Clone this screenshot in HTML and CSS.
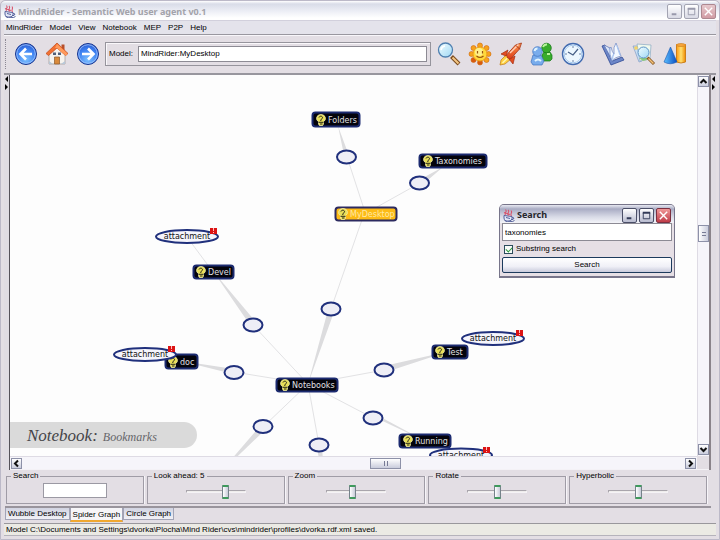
FILE: index.html
```html
<!DOCTYPE html>
<html lang="en">
<head>
<meta charset="utf-8">
<title>MindRider - Semantic Web user agent v0.1</title>
<link rel="stylesheet" href="styles.css">
</head>
<body>
<svg class="defs" aria-hidden="true">
  <defs>
    <radialGradient id="blue" cx=".5" cy=".75" r=".8"><stop offset="0" stop-color="#7cc0ff"/><stop offset=".6" stop-color="#3c7ff0"/><stop offset="1" stop-color="#2a55c8"/></radialGradient>
    <linearGradient id="glass" x2="1" y2="1"><stop offset="0" stop-color="#f2fdff"/><stop offset="1" stop-color="#9fd8f4"/></linearGradient>
    <linearGradient id="flame" x2="0" y2="1"><stop offset="0" stop-color="#ff9a50"/><stop offset="1" stop-color="#dc3a16"/></linearGradient>
    <linearGradient id="gold" x2="1"><stop offset="0" stop-color="#ff9a10"/><stop offset=".5" stop-color="#ffe070"/><stop offset="1" stop-color="#f08a00"/></linearGradient>
    <linearGradient id="cone" x2="1"><stop offset="0" stop-color="#5cc0ff"/><stop offset="1" stop-color="#0a4cc0"/></linearGradient>
    <linearGradient id="page" x2="1"><stop offset="0" stop-color="#ffffff"/><stop offset="1" stop-color="#a9c4f0"/></linearGradient>
    <symbol id="java" viewBox="0 0 12 13">
      <path d="M1 6.500L9 7.500v2a3 3 0 0 1-3 2.500H4.500A3 3 0 0 1 1 9z" fill="#e4e8f8" stroke="#55629c"/>
      <path d="M9 8.500l2 .5-1 1.500H8.500M1.500 11.500l3 1.300 5-.3 2-1M3 8.500l4 1" fill="none" stroke="#55629c"/>
      <path d="M2.500 6C.5 3.500 5 3.500 2.500 .5M5.500 6.500C3 4 7.500 3.500 5 .8M8.500 7C6.500 4.500 10 4 8 1.500M1 3.500l6 2" fill="none" stroke="#d8546c" stroke-width="1.100"/>
    </symbol>
    <symbol id="bulb" viewBox="0 0 10 12">
      <path d="M5 .4a4.500 4 0 0 1 2.500 7.300V10L6.500 11.700h-3L2.500 10V7.700A4.500 4 0 0 1 5 .4z" fill="#e9df58" stroke="#f6f3b4" stroke-width=".7"/>
      <path d="M3 3.500C3.500 1.500 7 2 6.500 4 6 5.300 4.500 5 4.800 7M2.500 8.300h5M4 10h2.500" fill="none" stroke="#26261a" stroke-width="1"/>
    </symbol>
    <symbol id="mark" viewBox="0 0 7 6"><path d="M0 0h7v6H0z" fill="#dc1414"/><path d="M3.500 0v3M3.500 4v1" stroke="#ffc0c0"/></symbol>
  </defs>
</svg>

<header class="titlebar">
  <svg class="java"><use href="#java"/></svg>
  <h1>MindRider - Semantic Web user agent v0.1</h1>
  <div class="winbtns faded">
    <button aria-label="Minimize"><svg viewBox="0 0 14 14"><path d="M4 10h5" stroke-width="2"/></svg></button>
    <button aria-label="Maximize"><svg viewBox="0 0 14 14"><path d="M3.500 4v6.500h7V4M3 4h8" stroke-width="1"/><path d="M3 4h8" stroke-width="2"/></svg></button>
    <button class="close" aria-label="Close"><svg viewBox="0 0 14 14"><path d="M3 3l8 8M11 3l-8 8" stroke-width="1.500"/></svg></button>
  </div>
</header>

<nav class="menu">
  <button>MindRider</button><button>Model</button><button>View</button><button>Notebook</button><button>MEP</button><button>P2P</button><button>Help</button>
</nav>

<div class="toolbar">
  <span class="grip"></span>
  <button class="tool" aria-label="Back"><svg viewBox="0 0 24 24"><circle cx="12" cy="12" r="10.500" fill="url(#blue)" stroke="#16338c"/><circle cx="12" cy="12" r="9.300" fill="none" stroke="#a8ccff" stroke-width=".8"/><path d="M18 12H7M12 6.500L6.500 12l5.500 5.500" fill="none" stroke="#fff" stroke-width="2.600"/></svg></button>
  <button class="tool" aria-label="Home"><svg viewBox="0 0 24 24"><path d="M4 11l8-7 8 7v11H4z" fill="#f6f3ee" stroke="#a6a09c" stroke-width=".8"/><path d="M16.500 2.500h3V8h-3z" fill="#b8502c"/><path d="M12 1L1 11.500l2.500 2L12 6l8.500 7.500 2.500-2z" fill="#f27032" stroke="#c04818" stroke-width=".7"/><path d="M12 2l-2 4 2 0 9 8 1.500-2.500z" fill="#ff9a5c"/><path d="M9.500 15h5v7h-5z" fill="#d98a3c" stroke="#8d5828" stroke-width=".7"/><path d="M8 10.500h3v2.500H8zM13 10.500h3v2.500h-3z" fill="#516078"/><path d="M4 19l4 3H4zM20 19l-4 3h4z" fill="#b8c8d8"/></svg></button>
  <button class="tool" aria-label="Forward"><svg viewBox="0 0 24 24"><circle cx="12" cy="12" r="10.500" fill="url(#blue)" stroke="#16338c"/><circle cx="12" cy="12" r="9.300" fill="none" stroke="#a8ccff" stroke-width=".8"/><path d="M6 12h11M12 6.500l5.500 5.500-5.500 5.500" fill="none" stroke="#fff" stroke-width="2.600"/></svg></button>
  <div class="model">
    <label for="model">Model:</label>
    <input id="model" type="text" value="MindRider:MyDesktop">
  </div>
  <button class="tool" aria-label="Find"><svg viewBox="0 0 24 24"><path d="M14.500 14.500l7.500 7.500" stroke="#7a4a1c" stroke-width="4"/><path d="M15.500 15.500l6 6" stroke="#f4c684" stroke-width="2"/><circle cx="8.500" cy="8" r="7" fill="url(#glass)" stroke="#5080b0" stroke-width="1.300"/><path d="M4 8a5 5 0 0 1 4-4" fill="none" stroke="#fff" stroke-width="1.500"/></svg></button>
  <button class="tool" aria-label="Sun"><svg viewBox="0 0 24 24"><g fill="#f6a21c" stroke="#d06a10" stroke-width=".6"><circle cx="12" cy="3.500" r="2.500"/><circle cx="18.500" cy="6" r="2.500"/><circle cx="20.500" cy="12" r="2.500"/><circle cx="18.500" cy="18" r="2.500"/><circle cx="12" cy="20.500" r="2.500" fill="#d85a10"/><circle cx="5.500" cy="18" r="2.500" fill="#d85a10"/><circle cx="3.500" cy="12" r="2.500"/><circle cx="5.500" cy="6" r="2.500"/></g><circle cx="12" cy="12" r="7" fill="#ffd83c" stroke="#ee9c18"/><circle cx="11" cy="10" r="4" fill="#fff08c"/><path d="M9.500 9v2.500M14.500 9v2.500M8.500 14q3.500 3 7 0" fill="none" stroke="#9a5410" stroke-width="1.200"/></svg></button>
  <button class="tool" aria-label="Launch"><svg viewBox="0 0 24 24"><path d="M7 13l-5 5-1 5 5-1 6-5z" fill="#ffcf40" stroke="#bd7818" stroke-width=".7"/><path d="M3.500 21l5-5" stroke="#fff8b0" stroke-width="1.500"/><path d="M9 8l-7 4 5 2zM16 14l-2 8-4-5z" fill="#e24c20" stroke="#a52c10" stroke-width=".7"/><path d="M22.500 1l-6 2-9 10 1 3 3 1 9-10z" fill="url(#flame)" stroke="#a53414" stroke-width=".8"/><path d="M19.500 2.500L11 11" stroke="#ffd0b8" stroke-width="1.500"/><path d="M17 3.500l4 4" stroke="#a53414"/></svg></button>
  <button class="tool" aria-label="People"><svg viewBox="0 0 24 24"><g fill="#39ac2c" stroke="#16761a" stroke-width=".7"><path d="M12 18v-5l2-3h6l2 3v4l-2 2h-7z"/><circle cx="16.500" cy="6" r="4.800"/></g><path d="M13 5a4 4 0 0 1 4-2.500M17 12h3" stroke="#b8f59c" stroke-width="1.800" fill="none"/><g fill="#79acec" stroke="#3f73bf" stroke-width=".7"><path d="M1 20l2-7h8l3 6-2 4H3z"/><circle cx="7.500" cy="9.500" r="4.800"/></g><path d="M4.500 9a3 3 0 0 1 3-2.500M5 19q3-3 6 0" stroke="#e0f4ff" stroke-width="2" fill="none"/></svg></button>
  <button class="tool" aria-label="History"><svg viewBox="0 0 24 24"><circle cx="12" cy="12" r="10.500" fill="#edf7ff" stroke="#426bb0" stroke-width="1.400"/><circle cx="12" cy="12" r="8.800" fill="none" stroke="#a9cbee"/><path d="M12 4v2M12 18v2M4 12h2M18 12h2" stroke="#6c84a8"/><path d="M7 10l5 3 5-6" fill="none" stroke="#465e86" stroke-width="1.200"/></svg></button>
  <button class="tool apart" aria-label="Book"><svg viewBox="0 0 24 24"><path d="M1 4l3-1 7 16 10-4 2 3-13 5z" fill="#6c86c8" stroke="#304a94" stroke-width=".8"/><path d="M3 3l6 3 3 14z" fill="url(#page)" stroke="#6378b8" stroke-width=".8"/><path d="M11 19Q8 12 9 6l1-1q1 5 3 7Q12 5 15 1l5 13q-6 1-9 5z" fill="#f4f9ff" stroke="#7890c8" stroke-width=".8"/><path d="M12 18q-1-4 1-6M16 4l3 9" fill="none" stroke="#a9c4f0" stroke-width="1.200"/></svg></button>
  <button class="tool" aria-label="Search map"><svg viewBox="0 0 24 24"><path d="M1 4l4 0 5 15-3 1z" fill="#c9dff4" stroke="#7291c0" stroke-width=".6"/><path d="M5 2l14 1-1 14-10 2z" fill="#f1faed" stroke="#88a7c3" stroke-width=".7"/><path d="M2 5l3-1 1 3-3 1z" fill="#f0d26c"/><path d="M7 16l4 3 4-1v-2z" fill="#8ccb7c"/><path d="M15.500 15.500l6.500 6.500" stroke="#855520" stroke-width="3"/><path d="M16.500 16.500l5 5" stroke="#f5c278" stroke-width="1.500"/><circle cx="11.500" cy="10.500" r="5.500" fill="url(#glass)" stroke="#5c92c4"/></svg></button>
  <button class="tool" aria-label="Shapes"><svg viewBox="0 0 24 24"><path d="M13.500 2.500V20q4.500 2 9 0V2.500z" fill="url(#gold)" stroke="#c87810" stroke-width=".9"/><ellipse cx="18" cy="3" rx="4.500" ry="1.500" fill="#f7a43c" stroke="#c87810" stroke-width=".6"/><path d="M7.500 5L1 20q6 3.500 13 0z" fill="url(#cone)" stroke="#1858b0" stroke-width=".6"/></svg></button>
</div>

<main class="work">
  <div class="splitter left"><svg viewBox="0 0 5 20"><path d="M4 1v6L1 4zM1 9v6l3-3z"/></svg></div>
  <div class="viewport">
    <div class="canvas">
      <svg class="graph" role="img" aria-label="Spider graph">
        <g transform="translate(-10 -75)">
          <g class="thin">
            <path d="M347 157L365 212M420 183L368 212M364 214L331 309M308 384L253 325M308 384L234 372M308 384L384 370M308 384L373 418M308 384L319 445M308 384L263 427M187 237L213 272"/>
          </g>
          <g class="wedge">
            <path d="M338 126l6 29 4-2zM443 167l-26 14 4 5zM308 384l20-74 6 2zM213 271l37 54 5-4zM181 361l53 8-1 5zM450 351l-66 15 2 6zM425 441l-53-25 3-2zM324 480l-8-35h6zM218 475l42-49 5 4z"/>
          </g>
          <g class="joint">
            <ellipse cx="346.500" cy="157" rx="9.500" ry="6.500"/><ellipse cx="419.500" cy="183" rx="9.500" ry="6.500"/><ellipse cx="331" cy="309" rx="9.500" ry="6.500"/><ellipse cx="253" cy="325" rx="9.500" ry="6.500"/><ellipse cx="234" cy="372.500" rx="9.500" ry="6.500"/><ellipse cx="384" cy="370" rx="9.500" ry="6.500"/><ellipse cx="373" cy="418" rx="9.500" ry="6.500"/><ellipse cx="319" cy="445" rx="9.500" ry="6.500"/><ellipse cx="263" cy="426.500" rx="9.500" ry="6.500"/>
          </g>
          <g class="node">
            <rect x="312.500" y="112.500" width="47" height="14" rx="3"/><use href="#bulb" x="316" y="114" width="10" height="12"/><text x="328" y="123">Folders</text>
            <rect x="419.500" y="154.500" width="67" height="13" rx="3"/><use href="#bulb" x="423" y="155" width="10" height="12"/><text x="435" y="164">Taxonomies</text>
            <rect x="193.500" y="265.500" width="40" height="13" rx="3"/><use href="#bulb" x="196" y="266" width="10" height="12"/><text x="208" y="275">Devel</text>
            <rect x="165.500" y="354.500" width="32" height="14" rx="3"/><use href="#bulb" x="168" y="356" width="10" height="12"/><text x="180" y="365">doc</text>
            <rect x="276.500" y="378.500" width="61" height="13" rx="3"/><use href="#bulb" x="280" y="379" width="10" height="12"/><text x="292" y="388">Notebooks</text>
            <rect x="432.500" y="345.500" width="35" height="13" rx="3"/><use href="#bulb" x="435" y="346" width="10" height="12"/><text x="447" y="355">Test</text>
            <rect x="399.500" y="434.500" width="51" height="13" rx="3"/><use href="#bulb" x="403" y="435" width="10" height="12"/><text x="415" y="444">Running</text>
          </g>
          <g class="node current">
            <rect x="335.500" y="207.500" width="61" height="13" rx="3"/><use href="#bulb" x="338" y="208" width="10" height="12"/><text x="350" y="217">MyDesktop</text>
          </g>
          <g class="attach">
            <ellipse cx="187" cy="236.500" rx="31" ry="6.500"/><text x="187" y="239">attachment</text><use href="#mark" x="210" y="228" width="7" height="6"/>
            <ellipse cx="145" cy="354.500" rx="31" ry="6.500"/><text x="145" y="357">attachment</text><use href="#mark" x="168" y="346" width="7" height="6"/>
            <ellipse cx="493" cy="338.500" rx="31" ry="6.500"/><text x="493" y="341">attachment</text><use href="#mark" x="516" y="330" width="7" height="6"/>
            <ellipse cx="461" cy="455" rx="31" ry="6.500"/><text x="461" y="458">attachment</text><use href="#mark" x="483" y="447" width="7" height="6"/>
          </g>
        </g>
      </svg>
      <p class="banner"><span class="kind">Notebook:</span> <span>Bookmarks</span></p>
    </div>
    <div class="vscroll">
      <button aria-label="Scroll up"><svg viewBox="0 0 9 9"><path d="M1.500 6l3-3 3 3"/></svg></button>
      <span class="thumb"></span>
      <button class="end" aria-label="Scroll down"><svg viewBox="0 0 9 9"><path d="M1.500 3l3 3 3-3"/></svg></button>
    </div>
    <div class="hscroll">
      <button aria-label="Scroll left"><svg viewBox="0 0 9 9"><path d="M6 1.500l-3 3 3 3"/></svg></button>
      <span class="thumb"></span>
      <button class="end" aria-label="Scroll right"><svg viewBox="0 0 9 9"><path d="M3 1.500l3 3-3 3"/></svg></button>
    </div>
    <section class="dialog" role="dialog" aria-labelledby="dlg">
      <div class="dlgtitle">
        <svg class="java"><use href="#java"/></svg>
        <h2 id="dlg">Search</h2>
        <div class="winbtns">
          <button aria-label="Minimize"><svg viewBox="0 0 14 14"><path d="M4 10h5" stroke-width="2"/></svg></button>
          <button aria-label="Maximize"><svg viewBox="0 0 14 14"><path d="M3.500 4v6.500h7V4" stroke-width="1"/><path d="M3 4h8" stroke-width="2"/></svg></button>
          <button class="close" aria-label="Close"><svg viewBox="0 0 14 14"><path d="M3 3l8 8M11 3l-8 8" stroke-width="1.500"/></svg></button>
        </div>
      </div>
      <input class="query" type="text" value="taxonomies" aria-label="Search text">
      <label class="check"><input type="checkbox" checked>Substring search</label>
      <button class="go">Search</button>
    </section>
  </div>
  <div class="splitter right"><svg viewBox="0 0 5 20"><path d="M4 1v6L1 4zM1 9v6l3-3z"/></svg></div>
</main>

<div class="controls">
  <fieldset><legend>Search</legend><input class="find" type="text" aria-label="Search"></fieldset>
  <fieldset><legend>Look ahead: 5</legend><input type="range" value="69" aria-label="Look ahead"></fieldset>
  <fieldset><legend>Zoom</legend><input type="range" value="42" aria-label="Zoom"></fieldset>
  <fieldset><legend>Rotate</legend><input type="range" value="50" aria-label="Rotate"></fieldset>
  <fieldset><legend>Hyperbolic</legend><input type="range" value="50" aria-label="Hyperbolic"></fieldset>
</div>

<div class="tabs" role="tablist">
  <button role="tab">Wubble Desktop</button><button role="tab" class="active" aria-selected="true">Spider Graph</button><button role="tab">Circle Graph</button>
</div>

<footer class="status">Model C:\Documents and Settings\dvorka\Plocha\Mind Rider\cvs\mindrider\profiles\dvorka.rdf.xml saved.</footer>
</body>
</html>
```
FILE: styles.css
```css
* { box-sizing: border-box; }

body {
  margin: 0;
  min-height: 100vh;
  display: flex;
  flex-direction: column;
  padding: 0 3px 3px;
  border: 1px solid #bcb9c8;
  border-radius: 5px 5px 0 0;
  background: #e3dee4;
  color: #000;
  font: 8px/10px "Liberation Sans", Arial, sans-serif;
}

button, input { font: inherit; color: inherit; margin: 0; }
button { padding: 0; border: 0; background: none; }
h1, h2, p { margin: 0; }
.defs { position: absolute; width: 0; height: 0; }

/* Title bars */
.titlebar {
  display: flex;
  align-items: center;
  height: 19px;
  margin: 0 -3px;
  padding: 2px 3px 0;
  gap: 2px;
  border-radius: 5px 5px 0 0;
  background: linear-gradient(#fff 0, #d9dce8 3px, #eceef5 10px, #fff 17px);
}
.java { width: 12px; height: 13px; flex: none; }
h1, h2 {
  flex: 1;
  font: bold 9px/12px "Noto Sans", Tahoma, sans-serif;
  color: #a3a3aa;
}
.winbtns { display: flex; gap: 2px; }
.winbtns button {
  width: 15px;
  height: 15px;
  border: 1px solid #4b4f68;
  border-radius: 2px;
  background: linear-gradient(#fff, #b9bcd0);
}
.winbtns svg { display: block; width: 13px; height: 13px; fill: none; stroke: #333b58; }
.winbtns .close { background: linear-gradient(#f09898, #c03c48); border-color: #7c3040; }
.winbtns .close svg { stroke: #fff; }
.winbtns.faded button { border-color: #a3a4b2; background: linear-gradient(#fff, #d9dae5); }
.winbtns.faded svg { stroke: #9899ab; }
.winbtns.faded .close { border-color: #ad8890; background: linear-gradient(#e6c8cc, #d19ca4); }
.winbtns.faded .close svg { stroke: #fff; }

/* Menu */
.menu {
  display: flex;
  gap: 7px;
  height: 15px;
  padding: 0 2px;
  background: #e4e3eb;
  border-top: 1px solid #d2d0dc;
  border-bottom: 1px solid #99979f;
}

/* Toolbar */
.toolbar {
  display: flex;
  align-items: center;
  height: 38px;
  padding: 0 26px 2px 1px;
  border-top: 1px solid #f8f6fa;
}
.grip { width: 2px; height: 30px; margin-right: 3px; border-left: 1px dotted #8c8894; }
.tool { width: 31px; height: 24px; flex: none; }
.tool svg { display: block; width: 24px; height: 24px; margin: 0 auto; }
.apart { margin-left: 9px; }
.model {
  flex: 1;
  display: flex;
  align-items: center;
  gap: 5px;
  height: 24px;
  margin: 0 2px;
  padding: 0 3px;
  border: 1px solid #96949c;
  box-shadow: inset 1px 1px #faf8fb;
}
.model input {
  flex: 1;
  min-width: 0;
  height: 16px;
  padding: 0 2px;
  border: 1px solid #8d8b94;
  background: #fff;
}

/* Work area */
.work { flex: 1; display: flex; border-top: 2px solid #98969e; min-height: 0; }
.splitter { flex: none; background: #e0dce3; }
.splitter svg { display: block; width: 5px; height: 20px; fill: #000; }
.left { width: 6px; border-right: 1px solid #55525a; }
.right { width: 7px; border-left: 2px solid #8a838a; }
.viewport {
  position: relative;
  flex: 1;
  display: grid;
  grid-template: minmax(0, 1fr) 13px / minmax(0, 1fr) 12px;
  border-bottom: 1px solid #f4f2f6;
}
.canvas { position: relative; overflow: hidden; background: #fdfdfd; }
.graph { position: absolute; inset: 0; width: 100%; height: 100%; }
.graph text { font: 8px "DejaVu Sans", Verdana, sans-serif; }
.thin { fill: none; stroke: #e2e2e4; }
.wedge { fill: #dcdcde; }
.joint ellipse, .attach ellipse { fill: #eeeef6; stroke: #20307c; stroke-width: 2; }
.attach ellipse { fill: #f5f5fc; }
.attach text { text-anchor: middle; fill: #111; }
.node rect { fill: #04040c; stroke: #1c2b70; stroke-width: 2; }
.node text { fill: #e0e0e4; }
.current rect { fill: #fdbb16; stroke: #2c2a60; }
.node.current text { fill: #ffe9a4; }
.banner {
  position: absolute;
  left: 0;
  bottom: 8px;
  height: 26px;
  padding: 0 40px 0 17px;
  border-radius: 0 13px 13px 0;
  background: #dadada;
  color: #66666a;
  font: italic 12px/28px "Liberation Serif", serif;
}
.kind { font-size: 17px; color: #444448; margin-right: 2px; }

/* Scroll bars */
.vscroll, .hscroll { display: flex; align-items: center; background: #f6f5fa; }
.vscroll { flex-direction: column; padding: 1px 0; border-left: 1px solid #dedbe4; }
.hscroll { padding: 0 1px; border-top: 1px solid #dedbe4; }
.vscroll button, .hscroll button {
  width: 11px;
  height: 11px;
  border: 1px solid #8d91a8;
  background: linear-gradient(#fff, #c9ccdc);
}
.vscroll button svg, .hscroll button svg { display: block; width: 9px; height: 9px; fill: none; stroke: #111; stroke-width: 2; }
.thumb { border: 1px solid #8d91a8; }
.vscroll .thumb {
  width: 11px;
  height: 17px;
  margin-top: 138px;
  background: linear-gradient(#777b95, #777b95) center 6px / 4px 1px no-repeat, linear-gradient(#777b95, #777b95) center 9px / 4px 1px no-repeat, linear-gradient(90deg, #fff, #c9ccdc);
}
.hscroll .thumb {
  width: 31px;
  height: 11px;
  margin-left: 348px;
  background: linear-gradient(#777b95, #777b95) 13px center / 1px 5px no-repeat, linear-gradient(#777b95, #777b95) 16px center / 1px 5px no-repeat, linear-gradient(#fff, #c9ccdc);
}
.vscroll .end { margin-top: auto; }
.hscroll .end { margin-left: auto; }

/* Search dialog, floating over the graph */
.dialog {
  position: absolute;
  left: 489px;
  top: 129px;
  width: 176px;
  display: flex;
  flex-direction: column;
  padding: 0 2px 3px;
  border: 1px solid #77758a;
  border-bottom-width: 2px;
  border-radius: 5px 5px 0 0;
  background: #e6dfe5;
}
.dlgtitle {
  display: flex;
  align-items: center;
  gap: 2px;
  height: 18px;
  margin: 0 -2px;
  padding: 2px 3px 0;
  border-radius: 4px 4px 0 0;
  background: linear-gradient(#e8e9f2, #a9acc4 4px, #d9dbe7 12px, #f4f4f9);
}
.dlgtitle h2 { color: #26262c; }
.query { height: 18px; padding: 0 2px; border: 1px solid #8c8a94; background: #fff; }
.check { display: flex; align-items: center; gap: 3px; height: 16px; padding-left: 2px; }
.check input {
  appearance: none;
  width: 9px;
  height: 9px;
  border: 1px solid #2c4c5c;
  background: #f8fbf8;
  display: grid;
  place-items: center;
}
.check input:checked::before {
  content: "";
  width: 5px;
  height: 3px;
  border: solid #2d9a3c;
  border-width: 0 0 1px 1px;
  transform: rotate(-45deg);
}
.go {
  height: 16px;
  border: 1px solid #1c3a5c;
  border-radius: 2px;
  background: linear-gradient(#fff, #f0f0f7 60%, #c9cbdc);
}

/* Control groups */
.controls {
  display: grid;
  grid-template-columns: repeat(5, minmax(0, 1fr));
  gap: 3px;
  margin: 0 5px 0 1px;
  padding: 1px 4px 2px 1px;
  border-bottom: 2px solid #99949c;
}
fieldset {
  min-width: 0;
  height: 33px;
  margin: 0;
  padding: 2px 0 0;
  border: 1px solid #a09ca6;
  box-shadow: 1px 0 #f6f4f8;
  text-align: center;
}
legend { margin-left: 4px; padding: 0 2px; text-align: left; }
.find { display: block; width: 64px; height: 15px; margin: 0 auto; border: 1px solid #9b99a3; background: #fff; }
[type="range"] { appearance: none; display: block; width: 60px; height: 16px; margin: 0 auto; background: none; }
[type="range"]::-webkit-slider-runnable-track { height: 3px; border: 1px solid #b0acb2; border-color: #a9a5ac #f5f3f6 #f5f3f6 #a9a5ac; background: #efedec; }
[type="range"]::-webkit-slider-thumb {
  appearance: none;
  width: 7px;
  height: 14px;
  margin-top: -6px;
  border: 1px solid #75828a;
  border-top: 2px solid #3f9a5c;
  border-bottom: 2px solid #3f9a5c;
  border-radius: 1px;
  background: linear-gradient(90deg, #fff, #c8cbd8);
}

/* Tabs and status line */
.tabs { display: flex; align-items: flex-start; height: 15px; padding-left: 1px; }
.tabs button {
  height: 12px;
  padding: 0 2px;
  border: 1px solid #a3a4b6;
  border-top: 0;
  background: linear-gradient(#d2d4e2, #f1f1f6);
}
.tabs .active { height: 14px; padding-top: 2px; border-bottom: 2px solid #f0a830; background: #f6f5f8; }
.status {
  height: 13px;
  padding: 1px 2px;
  border-top: 1px solid #99979c;
  border-bottom: 1px solid #b5b3bb;
  background: #ebeae4;
}
```
